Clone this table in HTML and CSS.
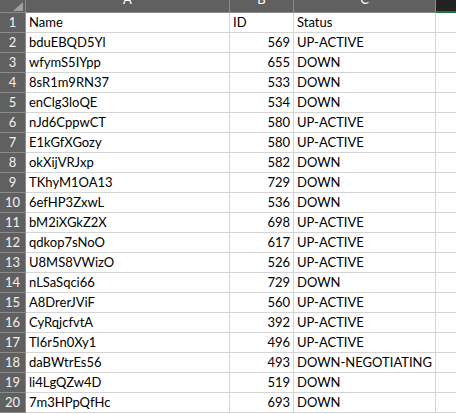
FILE: index.html
```html
<!DOCTYPE html>
<html>
<head>
<meta charset="utf-8">
<link rel="stylesheet" href="styles.css">
</head>
<body>
<div class="sheet">
  <div class="hd corner"><span class="tri"></span></div>
  <div class="hd col"><span>A</span></div>
  <div class="hd col"><span>B</span></div>
  <div class="hd col"><span>C</span></div>
  <div class="hd col sel"></div>

  <div class="rn">1</div><div class="c">Name</div><div class="c">ID</div><div class="c">Status</div><div class="c e"></div>
  <div class="rn">2</div><div class="c">bduEBQD5Yl</div><div class="c n">569</div><div class="c">UP-ACTIVE</div><div class="c e"></div>
  <div class="rn">3</div><div class="c">wfymS5IYpp</div><div class="c n">655</div><div class="c">DOWN</div><div class="c e"></div>
  <div class="rn">4</div><div class="c">8sR1m9RN37</div><div class="c n">533</div><div class="c">DOWN</div><div class="c e"></div>
  <div class="rn">5</div><div class="c">enClg3loQE</div><div class="c n">534</div><div class="c">DOWN</div><div class="c e"></div>
  <div class="rn">6</div><div class="c">nJd6CppwCT</div><div class="c n">580</div><div class="c">UP-ACTIVE</div><div class="c e"></div>
  <div class="rn">7</div><div class="c">E1kGfXGozy</div><div class="c n">580</div><div class="c">UP-ACTIVE</div><div class="c e"></div>
  <div class="rn">8</div><div class="c">okXijVRJxp</div><div class="c n">582</div><div class="c">DOWN</div><div class="c e"></div>
  <div class="rn">9</div><div class="c">TKhyM1OA13</div><div class="c n">729</div><div class="c">DOWN</div><div class="c e"></div>
  <div class="rn">10</div><div class="c">6efHP3ZxwL</div><div class="c n">536</div><div class="c">DOWN</div><div class="c e"></div>
  <div class="rn">11</div><div class="c">bM2iXGkZ2X</div><div class="c n">698</div><div class="c">UP-ACTIVE</div><div class="c e"></div>
  <div class="rn">12</div><div class="c">qdkop7sNoO</div><div class="c n">617</div><div class="c">UP-ACTIVE</div><div class="c e"></div>
  <div class="rn">13</div><div class="c">U8MS8VWizO</div><div class="c n">526</div><div class="c">UP-ACTIVE</div><div class="c e"></div>
  <div class="rn">14</div><div class="c">nLSaSqci66</div><div class="c n">729</div><div class="c">DOWN</div><div class="c e"></div>
  <div class="rn">15</div><div class="c">A8DrerJViF</div><div class="c n">560</div><div class="c">UP-ACTIVE</div><div class="c e"></div>
  <div class="rn">16</div><div class="c">CyRqjcfvtA</div><div class="c n">392</div><div class="c">UP-ACTIVE</div><div class="c e"></div>
  <div class="rn">17</div><div class="c">Tl6r5n0Xy1</div><div class="c n">496</div><div class="c">UP-ACTIVE</div><div class="c e"></div>
  <div class="rn">18</div><div class="c">daBWtrEs56</div><div class="c n">493</div><div class="c">DOWN-NEGOTIATING</div><div class="c e"></div>
  <div class="rn">19</div><div class="c">li4LgQZw4D</div><div class="c n">519</div><div class="c">DOWN</div><div class="c e"></div>
  <div class="rn">20</div><div class="c">7m3HPpQfHc</div><div class="c n">693</div><div class="c">DOWN</div><div class="c e"></div>
</div>
</body>
</html>
```

FILE: styles.css
```css
html, body {
  margin: 0;
  padding: 0;
  background: #ffffff;
}
.sheet {
  display: grid;
  grid-template-columns: 26px 204px 64px 142px 20px;
  grid-template-rows: 13px repeat(20, 20px);
  width: 456px;
  font-family: Lato, "Open Sans", sans-serif;
  font-size: 13px;
  color: #000;
  overflow: hidden;
}
.hd {
  background: #606060;
  border-right: 1px solid #8c8c8c;
  border-bottom: 1px solid #8c8c8c;
  box-sizing: border-box;
  overflow: hidden;
  color: #ffffff;
  text-align: center;
  position: relative;
}
.hd span {
  display: block;
  line-height: 14px;
  margin-top: -8px;
}
.corner .tri {
  position: absolute;
  right: 2px;
  bottom: 1px;
  width: 0;
  height: 0;
  margin: 0;
  border-left: 10px solid transparent;
  border-bottom: 9px solid #a0a0a0;
}
.hd.sel {
  background: #222222;
  border-right: none;
  border-bottom: 2px solid #217346;
}
.rn {
  background: #606060;
  color: #f2f2f2;
  border-right: 1px solid #8c8c8c;
  border-bottom: 1px solid #8c8c8c;
  box-sizing: border-box;
  display: flex;
  align-items: flex-end;
  justify-content: center;
  line-height: 17px;
  padding-bottom: 1px;
}
.c {
  border-right: 1px solid #d4d4d4;
  border-bottom: 1px solid #d4d4d4;
  box-sizing: border-box;
  display: flex;
  align-items: flex-end;
  padding: 0 3px 1px 3px;
  line-height: 17px;
  white-space: nowrap;
  overflow: hidden;
}
.c.n {
  justify-content: flex-end;
}
.c.e {
  border-right: none;
}
```
